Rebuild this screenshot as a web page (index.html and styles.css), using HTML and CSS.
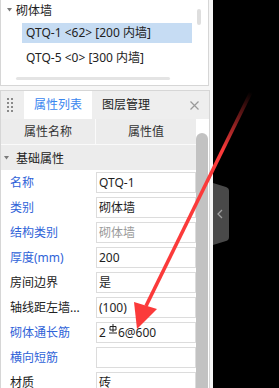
FILE: index.html
```html
<!DOCTYPE html>
<html>
<head>
<meta charset="utf-8">
<link rel="stylesheet" href="styles.css">
</head>
<body>
<div class="screen">
  <div class="left">
    <div class="tree">
      <div class="tree-head">
        <svg class="caret" width="5" height="4" viewBox="0 0 5 4"><path d="M0 0H5L2.5 3.5Z" fill="#7a7a7a"/></svg>
        <span>砌体墙</span>
      </div>
      <div class="tree-item selected">QTQ-1 &lt;62&gt; [200 内墙]</div>
      <div class="tree-item">QTQ-5 &lt;0&gt; [300 内墙]</div>
      <div class="hscroll"></div>
      <div class="vscroll"></div>
    </div>
    <div class="props">
      <div class="tabs">
        <svg class="grip" width="6" height="14" viewBox="0 0 6 14">
          <g fill="#8a8a8a">
            <rect x="0" y="0" width="2" height="2"/><rect x="4" y="0" width="2" height="2"/>
            <rect x="0" y="4" width="2" height="2"/><rect x="4" y="4" width="2" height="2"/>
            <rect x="0" y="8" width="2" height="2"/><rect x="4" y="8" width="2" height="2"/>
            <rect x="0" y="12" width="2" height="2"/><rect x="4" y="12" width="2" height="2"/>
          </g>
        </svg>
        <div class="tab active">属性列表</div>
        <div class="tab">图层管理</div>
        <svg class="close" width="9" height="9" viewBox="0 0 9 9"><path d="M0.5 0.5L8.5 8.5M8.5 0.5L0.5 8.5" stroke="#9a9a9a" stroke-width="1.2"/></svg>
      </div>
      <div class="grid-wrap">
        <div class="grid">
          <div class="head">
            <div class="hc hname">属性名称</div>
            <div class="hc hval">属性值</div>
          </div>
          <div class="section">
            <svg class="caret" width="5" height="4" viewBox="0 0 5 4"><path d="M0 0H5L2.5 3.5Z" fill="#7a7a7a"/></svg>
            <span>基础属性</span>
          </div>
          <div class="row"><div class="label blue">名称</div><div class="value">QTQ-1</div></div>
          <div class="row"><div class="label blue">类别</div><div class="value">砌体墙</div></div>
          <div class="row"><div class="label blue">结构类别</div><div class="value muted">砌体墙</div></div>
          <div class="row"><div class="label blue">厚度(mm)</div><div class="value">200</div></div>
          <div class="row"><div class="label">房间边界</div><div class="value">是</div></div>
          <div class="row"><div class="label">轴线距左墙...</div><div class="value">(100)</div></div>
          <div class="row"><div class="label blue">砌体通长筋</div><div class="value">2<svg class="rebar" width="8" height="10" viewBox="0 0 8 10"><path d="M4 0V8M1 2.5H7V6H1ZM0 9H8" stroke="#222" stroke-width="1" fill="none"/></svg>6@600</div></div>
          <div class="row"><div class="label blue">横向短筋</div><div class="value"></div></div>
          <div class="row"><div class="label">材质</div><div class="value">砖</div></div>
        </div>
        <div class="scroll"><div class="thumb"></div></div>
      </div>
    </div>
  </div>
  <div class="dark">
    <svg class="collapse" width="16" height="62" viewBox="0 0 16 62">
      <path d="M0 0L13 4Q16 5 16 8V54Q16 57 13 58L0 62Z" fill="#494949"/>
      <path d="M9 27L5 31L9 35" stroke="#a0a0a0" stroke-width="1.3" fill="none"/>
    </svg>
  </div>
  <svg class="arrow" width="279" height="388" viewBox="0 0 279 388">
    <defs>
      <linearGradient id="fade" gradientUnits="userSpaceOnUse" x1="251" y1="92" x2="222" y2="150">
        <stop offset="0" stop-color="#fb3a3a" stop-opacity="0"/>
        <stop offset="1" stop-color="#fb3a3a" stop-opacity="1"/>
      </linearGradient>
    </defs>
    <line x1="251" y1="92" x2="146" y2="306" stroke="url(#fade)" stroke-width="3.6"/>
    <polygon points="134,302 157,309 137,329" fill="#fb3a3a"/>
  </svg>
</div>
</body>
</html>
```
FILE: styles.css
```css
html, body {
  margin: 0;
  padding: 0;
}
body {
  width: 279px;
  height: 388px;
  overflow: hidden;
  background: #000;
  font-family: "Noto Sans", "Noto Sans CJK SC", sans-serif;
  font-size: 12px;
  color: #1e1e1e;
}
.screen {
  position: relative;
  display: flex;
  width: 279px;
  height: 388px;
}
.left {
  width: 213px;
  background: #f6f6f6;
  display: flex;
  flex-direction: column;
  gap: 4px;
}
.tree {
  position: relative;
  box-sizing: border-box;
  width: 209px;
  height: 86px;
  background: #fff;
  border: 1px solid #d6d6d6;
  border-top: none;
  display: flex;
  flex-direction: column;
}
.tree-head {
  height: 20px;
  display: flex;
  align-items: center;
  padding-left: 6px;
  gap: 4px;
  color: #222;
}
.tree-item {
  box-sizing: border-box;
  margin-left: 21px;
  width: 170px;
  height: 20px;
  line-height: 20px;
  padding-left: 4px;
  margin-top: 3px;
  white-space: nowrap;
  color: #222;
}
.tree-item + .tree-item {
  margin-top: 5px;
}
.tree-item.selected {
  background: #c6dcf3;
}
.hscroll {
  margin-top: 9px;
  margin-left: 15px;
  width: 154px;
  height: 3px;
  border-radius: 2px;
  background: #e4e4e4;
}
.vscroll {
  position: absolute;
  left: 196px;
  top: 9px;
  width: 4px;
  height: 16px;
  border-radius: 2px;
  background: #dedede;
}
.props {
  flex: 1;
  box-sizing: border-box;
  width: 210px;
  border: 1px solid #d6d6d6;
  border-bottom: none;
  background: #fff;
  display: flex;
  flex-direction: column;
  overflow: hidden;
}
.tabs {
  height: 28px;
  background: #eeeeee;
  display: flex;
  align-items: center;
  flex-shrink: 0;
}
.grip {
  margin-left: 6px;
  margin-right: 11px;
}
.tab {
  height: 28px;
  line-height: 28px;
  padding: 0 10px;
  color: #222;
}
.tab.active {
  background: #fff;
  color: #3a86ef;
}
.close {
  margin-left: auto;
  margin-right: 10px;
}
.grid-wrap {
  flex: 1;
  display: flex;
  min-height: 0;
}
.grid {
  width: 195px;
  display: flex;
  flex-direction: column;
}
.head {
  height: 25px;
  display: flex;
  flex-shrink: 0;
  background: #ececec;
  color: #333;
}
.hc {
  line-height: 25px;
  text-align: center;
}
.hname {
  box-sizing: border-box;
  width: 95px;
  border-right: 1px solid #fafafa;
}
.hval {
  flex: 1;
}
.section {
  box-sizing: border-box;
  height: 26px;
  flex-shrink: 0;
  border-top: 1px solid #fafafa;
  background: #ececec;
  display: flex;
  align-items: center;
  padding-left: 3px;
  gap: 7px;
  color: #222;
}
.row {
  height: 25px;
  display: flex;
  flex-shrink: 0;
}
.label {
  box-sizing: border-box;
  width: 95px;
  padding-left: 9px;
  line-height: 25px;
  white-space: nowrap;
  color: #222;
}
.label.blue {
  color: #2f63d8;
}
.value {
  box-sizing: border-box;
  margin-top: 2px;
  width: 100px;
  height: 21px;
  border: 1px solid #dcdcdc;
  padding-left: 2px;
  line-height: 19px;
  white-space: nowrap;
  color: #1e1e1e;
}
.value.muted {
  color: #9a9a9a;
}
.rebar {
  vertical-align: 3px;
  margin: 0 1px 0 3px;
}
.scroll {
  width: 13px;
  background: #fff;
  display: flex;
  flex-direction: column;
}
.thumb {
  margin-top: 14px;
  width: 12px;
  flex: 1;
  background: #c2c2c2;
  border-radius: 6px 6px 0 0;
}
.dark {
  flex: 1;
  background: #000;
}
.collapse {
  display: block;
  margin-top: 183px;
}
.arrow {
  position: absolute;
  left: 0;
  top: 0;
  pointer-events: none;
}
```
